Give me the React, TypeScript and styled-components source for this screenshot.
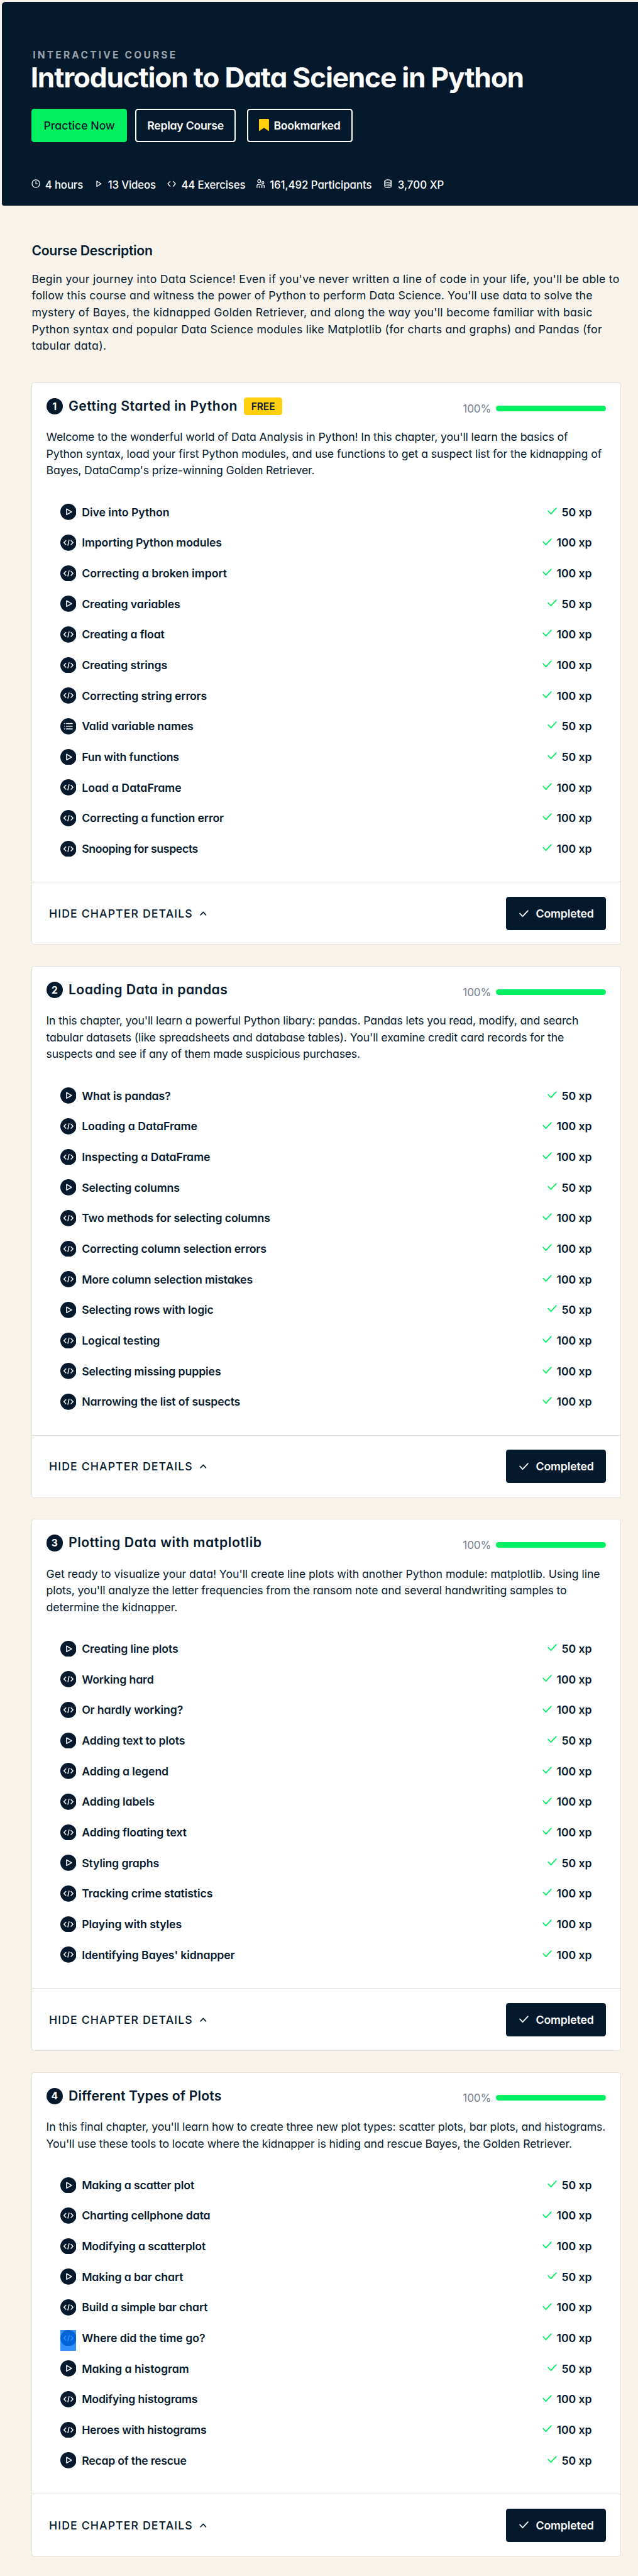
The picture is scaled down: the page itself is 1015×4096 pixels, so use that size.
import React from 'react';
import styled, { createGlobalStyle } from 'styled-components';

/* 1rem is ten design pixels. */
const GlobalStyle = createGlobalStyle`
  html { font-size: 8.849px; background: #f7f3eb; }
  body { margin: 0; }
  *, *::before, *::after { box-sizing: border-box; }
  #root {
    font-family: Inter, "Noto Sans", sans-serif;
    font-feature-settings: "cv11";
    color: #05192d;
  }
`;

const Page = styled.div`
  width: 100%;
  height: 462.88rem;
  overflow: hidden;
  padding: 0.3rem 0 0 0.3rem;
`;

const Hero = styled.header`
  height: 36.7rem;
  padding: 8.7rem 0 0 5.4rem;
  border-radius: 0.6rem 0 0 0.4rem;
  background: #05192d;
  color: #fff;
`;

const Eyebrow = styled.div`
  margin-left: 0.2rem;
  font-size: 1.75rem;
  font-weight: 700;
  line-height: 1.9rem;
  letter-spacing: 0.365rem;
  color: #9ba3ab;
`;

const Title = styled.h1`
  margin: 0.5rem 0 0 -0.2rem;
  font-size: 5rem;
  font-weight: 650;
  line-height: 5rem;
  letter-spacing: -0.138rem;
  white-space: nowrap;
`;

const Actions = styled.div`
  display: flex;
  margin-top: 3.1rem;
`;

const ActionButton = styled.button<{ $primary?: boolean; $width: number }>`
  display: flex;
  align-items: center;
  justify-content: center;
  gap: 0.8rem;
  width: ${p => p.$width}rem;
  height: 6rem;
  padding: 0;
  border: ${p => (p.$primary ? '0' : '2px solid #fff')};
  border-radius: 0.5rem;
  background: ${p => (p.$primary ? '#03ef62' : 'transparent')};
  color: ${p => (p.$primary ? '#05192d' : '#fff')};
  font: inherit;
  font-feature-settings: inherit;
  font-size: 2rem;
  font-weight: ${p => (p.$primary ? 500 : 600)};
  letter-spacing: ${p => (p.$primary ? '0' : '-0.03rem')};
  white-space: nowrap;

  & + & { margin-left: 1.5rem; }
  & + & + & { margin-left: 2rem; }
`;

const Stats = styled.ul`
  display: flex;
  align-items: center;
  height: 3rem;
  margin: 6.2rem 0 0;
  padding: 0;
  list-style: none;
`;

const Stat = styled.li<{ $width: number; $gap: number; $spacing?: number }>`
  display: flex;
  align-items: center;
  gap: ${p => p.$gap}rem;
  width: ${p => p.$width}rem;
  font-size: 1.9rem;
  font-weight: 500;
  letter-spacing: ${p => p.$spacing ?? -0.015}rem;
  white-space: nowrap;

  svg { flex: none; margin-bottom: 0.3rem; }
`;

const Main = styled.main`
  padding: 6.5rem 3.1rem 0 5.4rem;
`;

const SectionTitle = styled.h2`
  margin: 0;
  font-size: 2.4rem;
  font-weight: 600;
  line-height: 3rem;
  letter-spacing: -0.035rem;
`;

const Paragraph = styled.p`
  margin: 0;
  font-size: 2rem;
  line-height: 3rem;
`;

const Line = styled.span<{ $spacing: number }>`
  display: block;
  letter-spacing: ${p => p.$spacing / 10}rem;
  white-space: nowrap;
`;

const Description = styled(Paragraph)`
  margin: 2.2rem 0 5rem;
`;

const Card = styled.section`
  margin-bottom: 3.8rem;
  border: 1px solid #e5e1da;
  border-radius: 0.5rem;
  background: #fff;
`;

const CardBody = styled.div`
  padding: 2.7rem 2.5rem 3.25rem;
`;

const CardHeader = styled.div`
  display: flex;
  align-items: center;
  height: 3rem;
`;

const NumberBadge = styled.span`
  display: flex;
  align-items: center;
  justify-content: center;
  flex: none;
  width: 3rem;
  height: 3rem;
  border-radius: 50%;
  background: #05192d;
  color: #fff;
  font-size: 1.75rem;
  font-weight: 700;
`;

const ChapterTitle = styled.h3<{ $spacing: number }>`
  margin: 0 0 0.2rem 1rem;
  font-size: 2.4rem;
  font-weight: 600;
  line-height: 3rem;
  letter-spacing: ${p => p.$spacing / 10}rem;
  white-space: nowrap;
`;

const FreeTag = styled.span`
  display: flex;
  align-items: center;
  justify-content: center;
  width: 6.9rem;
  height: 3.1rem;
  margin-left: 1.15rem;
  border-radius: 0.5rem;
  background: #ffce0f;
  font-size: 1.75rem;
  font-weight: 600;
`;

const Progress = styled.div`
  display: flex;
  align-items: center;
  gap: 0.9rem;
  margin: 0.7rem 0 0 auto;
  color: #75808a;
  font-size: 1.95rem;
  letter-spacing: -0.02rem;
`;

const ProgressBar = styled.div`
  width: 19.8rem;
  height: 1rem;
  border-radius: 0.5rem;
  background: #03ef62;
`;

const Summary = styled(Paragraph)`
  margin-top: 2.6rem;
`;

const Exercises = styled.ul`
  margin: 3.15rem 0 0;
  padding: 0 2.6rem 0 2.5rem;
  list-style: none;
`;

const Exercise = styled.li`
  display: flex;
  align-items: center;
  height: 5.5rem;
  font-size: 2rem;
  font-weight: 600;
  white-space: nowrap;
`;

const ExerciseIcon = styled.span<{ $selected?: boolean }>`
  display: flex;
  flex: none;
  width: 2.9rem;
  margin: 0 1rem ${p => (p.$selected ? '-0.8rem' : '0')} 0;
  padding-bottom: ${p => (p.$selected ? '0.8rem' : '0')};
  background: ${p => (p.$selected ? '#3390ff' : 'transparent')};
  color: ${p => (p.$selected ? '#0064d9' : '#05192d')};
`;

const ExerciseName = styled.span<{ $spacing: number }>`
  letter-spacing: ${p => p.$spacing / 10}rem;
`;

const Points = styled.span`
  display: flex;
  align-items: center;
  gap: 0.85rem;
  margin-left: auto;
  letter-spacing: -0.01rem;

  svg { margin-bottom: 0.35rem; }
`;

const CardFooter = styled.footer`
  display: flex;
  align-items: center;
  justify-content: space-between;
  height: 11.17rem;
  padding: 0 2.5rem 0 3rem;
  border-top: 1px solid #e5e1da;
`;

const ToggleDetails = styled.button`
  display: flex;
  align-items: center;
  gap: 1.25rem;
  padding: 0;
  border: 0;
  background: none;
  color: inherit;
  font: inherit;
  font-size: 2rem;
  font-weight: 500;
  letter-spacing: 0.125rem;
`;

const CompletedButton = styled.button`
  display: flex;
  align-items: center;
  gap: 1.25rem;
  width: 18rem;
  height: 6rem;
  padding: 0 0 0 2.4rem;
  border: 0;
  border-radius: 0.5rem;
  background: #05192d;
  color: #fff;
  font: inherit;
  font-size: 2rem;
  font-weight: 600;
  letter-spacing: -0.015rem;
`;

const Glyph = styled.svg<{ $w: number; $h: number }>`
  display: block;
  width: ${p => p.$w}rem;
  height: ${p => p.$h}rem;
  fill: none;
  stroke: currentColor;
  stroke-width: 1.6;
  stroke-linecap: round;
  stroke-linejoin: round;
`;

const ClockIcon = () => (
  <Glyph $w={1.6} $h={1.6} viewBox="0 0 16 16">
    <g strokeWidth="1.4">
      <circle cx="8" cy="8" r="6.9" />
      <path d="M8 4V8.3H11" />
    </g>
  </Glyph>
);

const PlayIcon = () => (
  <Glyph $w={1} $h={1.2} viewBox="0 0 10 12">
    <g strokeWidth="1.5">
      <path d="M1.2 1.2V10.8L8.8 6Z" />
    </g>
  </Glyph>
);

const CodeIcon = () => (
  <Glyph $w={1.6} $h={1.2} viewBox="0 0 16 12">
    <g strokeWidth="1.5">
      <path d="M5.2 1.6L1.2 6L5.2 10.4M10.8 1.6L14.8 6L10.8 10.4" />
    </g>
  </Glyph>
);

const PeopleIcon = () => (
  <Glyph $w={1.5} $h={1.6} viewBox="0 0 15 16">
    <g strokeWidth="1.4">
      <circle cx="4.9" cy="3.5" r="2.7" />
      <circle cx="11.6" cy="6" r="1.9" />
      <path d="M1 15V11.8C1 9.9 2.2 8.8 4.9 8.8S8.8 9.9 8.8 11.8V15M4.9 15V12.2" />
      <path d="M10.9 10.3C13 10.1 14.2 10.9 14.2 12.6V15M11.6 15V13" />
    </g>
  </Glyph>
);

const DatabaseIcon = () => (
  <Glyph $w={1.4} $h={1.6} viewBox="0 0 14 16">
    <g strokeWidth="1.4">
      <ellipse cx="7" cy="3.4" rx="5.8" ry="2.4" />
      <path d="M1.2 3.4V12.6C1.2 15.8 12.8 15.8 12.8 12.6V3.4" />
      <path d="M1.2 6.5C1.2 9.7 12.8 9.7 12.8 6.5M1.2 9.6C1.2 12.8 12.8 12.8 12.8 9.6" />
    </g>
  </Glyph>
);

const BookmarkIcon = () => (
  <Glyph $w={1.8} $h={2.2} viewBox="0 0 18 22">
    <path d="M1.5 0H16.5Q18 0 18 1.5V21.2Q18 22.3 17 21.6L9 16L1 21.6Q0 22.3 0 21.2V1.5Q0 0 1.5 0Z" fill="#ffce0f" stroke="none" />
  </Glyph>
);

const CheckIcon = ({ color }: { color?: string }) => (
  <Glyph $w={1.7} $h={1.3} viewBox="0 0 17 13" color={color}>
    <g strokeWidth="2">
      <path d="M1.3 6.2L6.2 11.5L15.7 1.3" />
    </g>
  </Glyph>
);

const ChevronUpIcon = () => (
  <Glyph $w={1.2} $h={0.8} viewBox="0 0 12 8">
    <g strokeWidth="1.8">
      <path d="M1.2 6.6L6 1.6L10.8 6.6" />
    </g>
  </Glyph>
);

type Kind = 'video' | 'code' | 'list';

const KindIcon = ({ kind, selected }: { kind: Kind; selected?: boolean }) => (
  <Glyph $w={2.9} $h={2.9} viewBox="0 0 29 29">
    <circle cx="14.5" cy="14.5" r="14.5" fill="currentColor" stroke="none" />
    <g stroke={selected ? '#3390ff' : '#fff'} strokeWidth="1.7">
      {kind === 'video' && <path d="M11.2 9.3V19.6L20.3 14.45Z" />}
      {kind === 'code' && (
        <path d="M10 10.7L6.4 14.4L10 18.1M19.2 10.7L22.8 14.4L19.2 18.1M15.7 9.8L13.6 19.2" />
      )}
      {kind === 'list' && (
        <path d="M10.9 9.7H21.6M10.9 14.5H21.6M10.9 19.3H21.6M7.4 9.7H7.5M7.4 14.5H7.5M7.4 19.3H7.5" />
      )}
    </g>
  </Glyph>
);

type Text = [text: string, spacing: number];
type Item = [kind: Kind, name: string, spacing?: number];

interface Chapter {
  title: Text;
  free?: boolean;
  summary: Text[];
  items: Item[];
  selected?: string;
}

const description: Text[] = [
  ["Begin your journey into Data Science! Even if you've never written a line of code in your life, you'll be able to", 0.288],
  ["follow this course and witness the power of Python to perform Data Science. You'll use data to solve the", 0.2],
  ["mystery of Bayes, the kidnapped Golden Retriever, and along the way you'll become familiar with basic", 0.295],
  ['Python syntax and popular Data Science modules like Matplotlib (for charts and graphs) and Pandas (for', 0.288],
  ['tabular data).', 0.39],
];

const chapters: Chapter[] = [
  {
    title: ['Getting Started in Python', 0.483],
    free: true,
    summary: [
      ["Welcome to the wonderful world of Data Analysis in Python! In this chapter, you'll learn the basics of", -0.141],
      ['Python syntax, load your first Python modules, and use functions to get a suspect list for the kidnapping of', -0.124],
      ["Bayes, DataCamp's prize-winning Golden Retriever.", -0.188],
    ],
    items: [
      ['video', 'Dive into Python', -0.033],
      ['code', 'Importing Python modules', -0.148],
      ['code', 'Correcting a broken import', 0],
      ['video', 'Creating variables', -0.1],
      ['code', 'Creating a float'],
      ['code', 'Creating strings', -0.125],
      ['code', 'Correcting string errors', -0.12],
      ['list', 'Valid variable names', -0.15],
      ['video', 'Fun with functions', -0.201],
      ['code', 'Load a DataFrame', 0.06],
      ['code', 'Correcting a function error'],
      ['code', 'Snooping for suspects', -0.41],
    ],
  },
  {
    title: ['Loading Data in pandas', 0.457],
    summary: [
      ["In this chapter, you'll learn a powerful Python libary: pandas. Pandas lets you read, modify, and search", -0.179],
      ["tabular datasets (like spreadsheets and database tables). You'll examine credit card records for the", -0.131],
      ['suspects and see if any of them made suspicious purchases.', -0.263],
    ],
    items: [
      ['video', 'What is pandas?', -0.18],
      ['code', 'Loading a DataFrame', -0.03],
      ['code', 'Inspecting a DataFrame', -0.03],
      ['video', 'Selecting columns'],
      ['code', 'Two methods for selecting columns', -0.16],
      ['code', 'Correcting column selection errors'],
      ['code', 'More column selection mistakes', -0.16],
      ['video', 'Selecting rows with logic', -0.16],
      ['code', 'Logical testing'],
      ['code', 'Selecting missing puppies'],
      ['code', 'Narrowing the list of suspects', -0.16],
    ],
  },
  {
    title: ['Plotting Data with matplotlib', 0.662],
    summary: [
      ["Get ready to visualize your data! You'll create line plots with another Python module: matplotlib. Using line", -0.071],
      ["plots, you'll analyze the letter frequencies from the ransom note and several handwriting samples to", -0.127],
      ['determine the kidnapper.', -0.048],
    ],
    items: [
      ['video', 'Creating line plots'],
      ['code', 'Working hard'],
      ['code', 'Or hardly working?'],
      ['video', 'Adding text to plots'],
      ['code', 'Adding a legend'],
      ['code', 'Adding labels'],
      ['code', 'Adding floating text'],
      ['video', 'Styling graphs'],
      ['code', 'Tracking crime statistics'],
      ['code', 'Playing with styles'],
      ['code', "Identifying Bayes' kidnapper"],
    ],
  },
  {
    title: ['Different Types of Plots', 0.147],
    summary: [
      ["In this final chapter, you'll learn how to create three new plot types: scatter plots, bar plots, and histograms.", -0.121],
      ["You'll use these tools to locate where the kidnapper is hiding and rescue Bayes, the Golden Retriever.", -0.138],
    ],
    selected: 'Where did the time go?',
    items: [
      ['video', 'Making a scatter plot'],
      ['code', 'Charting cellphone data'],
      ['code', 'Modifying a scatterplot'],
      ['video', 'Making a bar chart'],
      ['code', 'Build a simple bar chart'],
      ['code', 'Where did the time go?', -0.046],
      ['video', 'Making a histogram', 0],
      ['code', 'Modifying histograms', -0.18],
      ['code', 'Heroes with histograms', -0.245],
      ['video', 'Recap of the rescue', -0.275],
    ],
  },
];

const xpFor = (kind: Kind) => (kind === 'code' ? 100 : 50);

const Lines = ({ lines }: { lines: Text[] }) => (
  <>
    {lines.map(([text, spacing]) => (
      <Line key={text} $spacing={spacing}>{text}</Line>
    ))}
  </>
);

const ChapterCard = ({ chapter, number }: { chapter: Chapter; number: number }) => (
  <Card>
    <CardBody>
      <CardHeader>
        <NumberBadge>{number}</NumberBadge>
        <ChapterTitle $spacing={chapter.title[1]}>{chapter.title[0]}</ChapterTitle>
        {chapter.free && <FreeTag>FREE</FreeTag>}
        <Progress>
          100%
          <ProgressBar />
        </Progress>
      </CardHeader>
      <Summary><Lines lines={chapter.summary} /></Summary>
      <Exercises>
        {chapter.items.map(([kind, name, spacing = -0.13]) => {
          const selected = name === chapter.selected;
          return (
            <Exercise key={name}>
              <ExerciseIcon $selected={selected}>
                <KindIcon kind={kind} selected={selected} />
              </ExerciseIcon>
              <ExerciseName $spacing={spacing}>{name}</ExerciseName>
              <Points>
                <CheckIcon color="#03ef62" />
                {xpFor(kind)} xp
              </Points>
            </Exercise>
          );
        })}
      </Exercises>
    </CardBody>
    <CardFooter>
      <ToggleDetails>
        HIDE CHAPTER DETAILS
        <ChevronUpIcon />
      </ToggleDetails>
      <CompletedButton>
        <CheckIcon />
        Completed
      </CompletedButton>
    </CardFooter>
  </Card>
);

export default function App() {
  return (
    <>
      <GlobalStyle />
      <Page>
        <Hero>
          <Eyebrow>INTERACTIVE COURSE</Eyebrow>
          <Title>Introduction to Data Science in Python</Title>
          <Actions>
            <ActionButton $primary $width={17.1}>Practice Now</ActionButton>
            <ActionButton $width={18.1}>Replay Course</ActionButton>
            <ActionButton $width={19}><BookmarkIcon />Bookmarked</ActionButton>
          </Actions>
          <Stats>
            <Stat $width={11.6} $gap={0.8}><ClockIcon />4 hours</Stat>
            <Stat $width={12.8} $gap={1.1}><PlayIcon />13 Videos</Stat>
            <Stat $width={16} $gap={0.9}><CodeIcon />44 Exercises</Stat>
            <Stat $width={23} $gap={0.9} $spacing={-0.005}><PeopleIcon />161,492 Participants</Stat>
            <Stat $width={12} $gap={1} $spacing={0.012}><DatabaseIcon />3,700 XP</Stat>
          </Stats>
        </Hero>
        <Main>
          <SectionTitle>Course Description</SectionTitle>
          <Description><Lines lines={description} /></Description>
          {chapters.map((chapter, index) => (
            <ChapterCard key={chapter.title[0]} chapter={chapter} number={index + 1} />
          ))}
        </Main>
      </Page>
    </>
  );
}
